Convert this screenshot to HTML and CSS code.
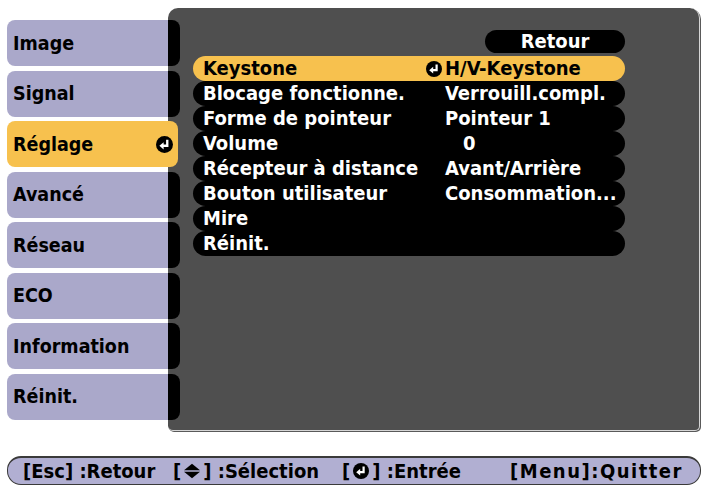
FILE: index.html
```html
<!DOCTYPE html>
<html lang="fr">
<head>
<meta charset="utf-8">
<title>Réglage</title>
<link rel="stylesheet" href="styles.css">
</head>
<body>
<div class="screen">
  <div class="top">
    <nav class="tabs">
      <div class="tab">Image</div>
      <div class="tab">Signal</div>
      <div class="tab active">Réglage
        <svg class="enter tab-enter" viewBox="0 0 16 16"><circle cx="8" cy="8" r="8" fill="#000"/><path d="M10.6 3.6V9.2H6.4" fill="none" stroke="#fff" stroke-width="2.2"/><path d="M3.2 9.2L7.2 5.8V12.6Z" fill="#fff"/></svg>
      </div>
      <div class="tab">Avancé</div>
      <div class="tab">Réseau</div>
      <div class="tab">ECO</div>
      <div class="tab">Information</div>
      <div class="tab">Réinit.</div>
    </nav>
    <section class="panel">
      <div class="menu">
        <div class="back">Retour</div>
        <div class="rows">
          <div class="row selected"><span class="label">Keystone</span><span class="value"><svg class="enter value-enter" viewBox="0 0 16 16"><circle cx="8" cy="8" r="8" fill="#000"/><path d="M10.6 3.6V9.2H6.4" fill="none" stroke="#fff" stroke-width="2.2"/><path d="M3.2 9.2L7.2 5.8V12.6Z" fill="#fff"/></svg>H/V-Keystone</span></div>
          <div class="row"><span class="label">Blocage fonctionne.</span><span class="value">Verrouill.compl.</span></div>
          <div class="row"><span class="label">Forme de pointeur</span><span class="value">Pointeur 1</span></div>
          <div class="row"><span class="label">Volume</span><span class="value num">0</span></div>
          <div class="row"><span class="label">Récepteur à distance</span><span class="value">Avant/Arrière</span></div>
          <div class="row"><span class="label">Bouton utilisateur</span><span class="value">Consommation...</span></div>
          <div class="row"><span class="label">Mire</span><span class="value"></span></div>
          <div class="row"><span class="label">Réinit.</span><span class="value"></span></div>
        </div>
      </div>
    </section>
  </div>
  <footer class="bar">
    <span class="hint">[Esc] :Retour</span>
    <span class="hint">[<svg class="updown" viewBox="0 0 18 16"><path d="M1 7.3L9 0.8L17 7.3Z" fill="#000"/><path d="M1 8.7L9 15.2L17 8.7Z" fill="#000"/></svg>] :Sélection</span>
    <span class="hint">[<svg class="enter bar-enter" viewBox="0 0 16 16"><circle cx="8" cy="8" r="8" fill="#000"/><path d="M10.6 3.6V9.2H6.4" fill="none" stroke="#fff" stroke-width="2.2"/><path d="M3.2 9.2L7.2 5.8V12.6Z" fill="#fff"/></svg>] :Entrée</span>
    <span class="hint wide">[Menu]:Quitter</span>
  </footer>
</div>
</body>
</html>
```
FILE: styles.css
```css
html, body {
  margin: 0;
  padding: 0;
  background: #ffffff;
}

.screen {
  width: 706px;
  height: 490px;
  font-family: "DejaVu Sans Condensed", "DejaVu Sans", sans-serif;
  font-stretch: condensed;
  font-weight: bold;
  font-size: 20px;
  color: #000;
  overflow: hidden;
}

.top {
  display: flex;
  align-items: flex-start;
  padding-top: 8px;
}

.tabs {
  width: 161px;
  margin-left: 7px;
  margin-top: 12px;
  display: flex;
  flex-direction: column;
  gap: 4.5px;
}

.tab {
  position: relative;
  z-index: 1;
  box-sizing: border-box;
  width: 173px;
  height: 46px;
  margin-right: -12px;
  padding-left: 6px;
  display: flex;
  align-items: center;
  font-size: 19.5px;
  border-radius: 8px;
  background: linear-gradient(to right, #aaa8ca 161px, #000 161px);
}

.tab.active {
  background: #f7c14e;
  width: 171px;
}

.enter {
  display: block;
  flex: none;
}

.tab-enter {
  width: 17px;
  height: 17px;
  margin-left: auto;
  margin-right: 5px;
}

.panel {
  box-sizing: border-box;
  width: 532px;
  height: 423px;
  background: #4f4f4f;
  border-radius: 10px 10px 5px 5px;
  border-right: 1px solid #d6d6d6;
  border-bottom: 1px solid #d6d6d6;
  box-shadow: 1px 1px 0 #5a5a5a;
  padding: 22px 0 0 25px;
}

.menu {
  width: 432px;
  display: flex;
  flex-direction: column;
}

.back {
  align-self: flex-end;
  width: 140px;
  height: 23px;
  line-height: 23px;
  border-radius: 12px;
  background: #000;
  color: #fff;
  text-align: center;
  margin-bottom: 3px;
}

.rows {
  display: flex;
  flex-direction: column;
}

.row {
  height: 25px;
  line-height: 25px;
  border-radius: 12.5px;
  background: #000;
  color: #fff;
  display: flex;
  white-space: nowrap;
}

.row.selected {
  background: #f7c14e;
  color: #000;
}

.label {
  width: 242px;
  padding-left: 10px;
  flex: none;
}

.value {
  display: flex;
  align-items: center;
}

.value.num {
  padding-left: 18px;
}

.value-enter {
  width: 16px;
  height: 16px;
  margin-left: -19px;
  margin-right: 3px;
}

.bar {
  box-sizing: border-box;
  margin: 25px 0 0 7px;
  width: 694px;
  height: 29px;
  border-radius: 14px;
  background: #b1afd2;
  border: 1px solid #3a3a3a;
  border-top-width: 2px;
  padding-left: 15px;
  display: grid;
  grid-template-columns: 150px 169px 168px auto;
  align-items: center;
  font-size: 20px;
  white-space: nowrap;
}

.hint {
  display: flex;
  align-items: center;
}

.hint.wide {
  letter-spacing: 1.5px;
}

.updown {
  width: 18px;
  height: 16px;
  margin: 0 2px;
}

.bar-enter {
  width: 16px;
  height: 16px;
  margin: 0 3px;
}
```
